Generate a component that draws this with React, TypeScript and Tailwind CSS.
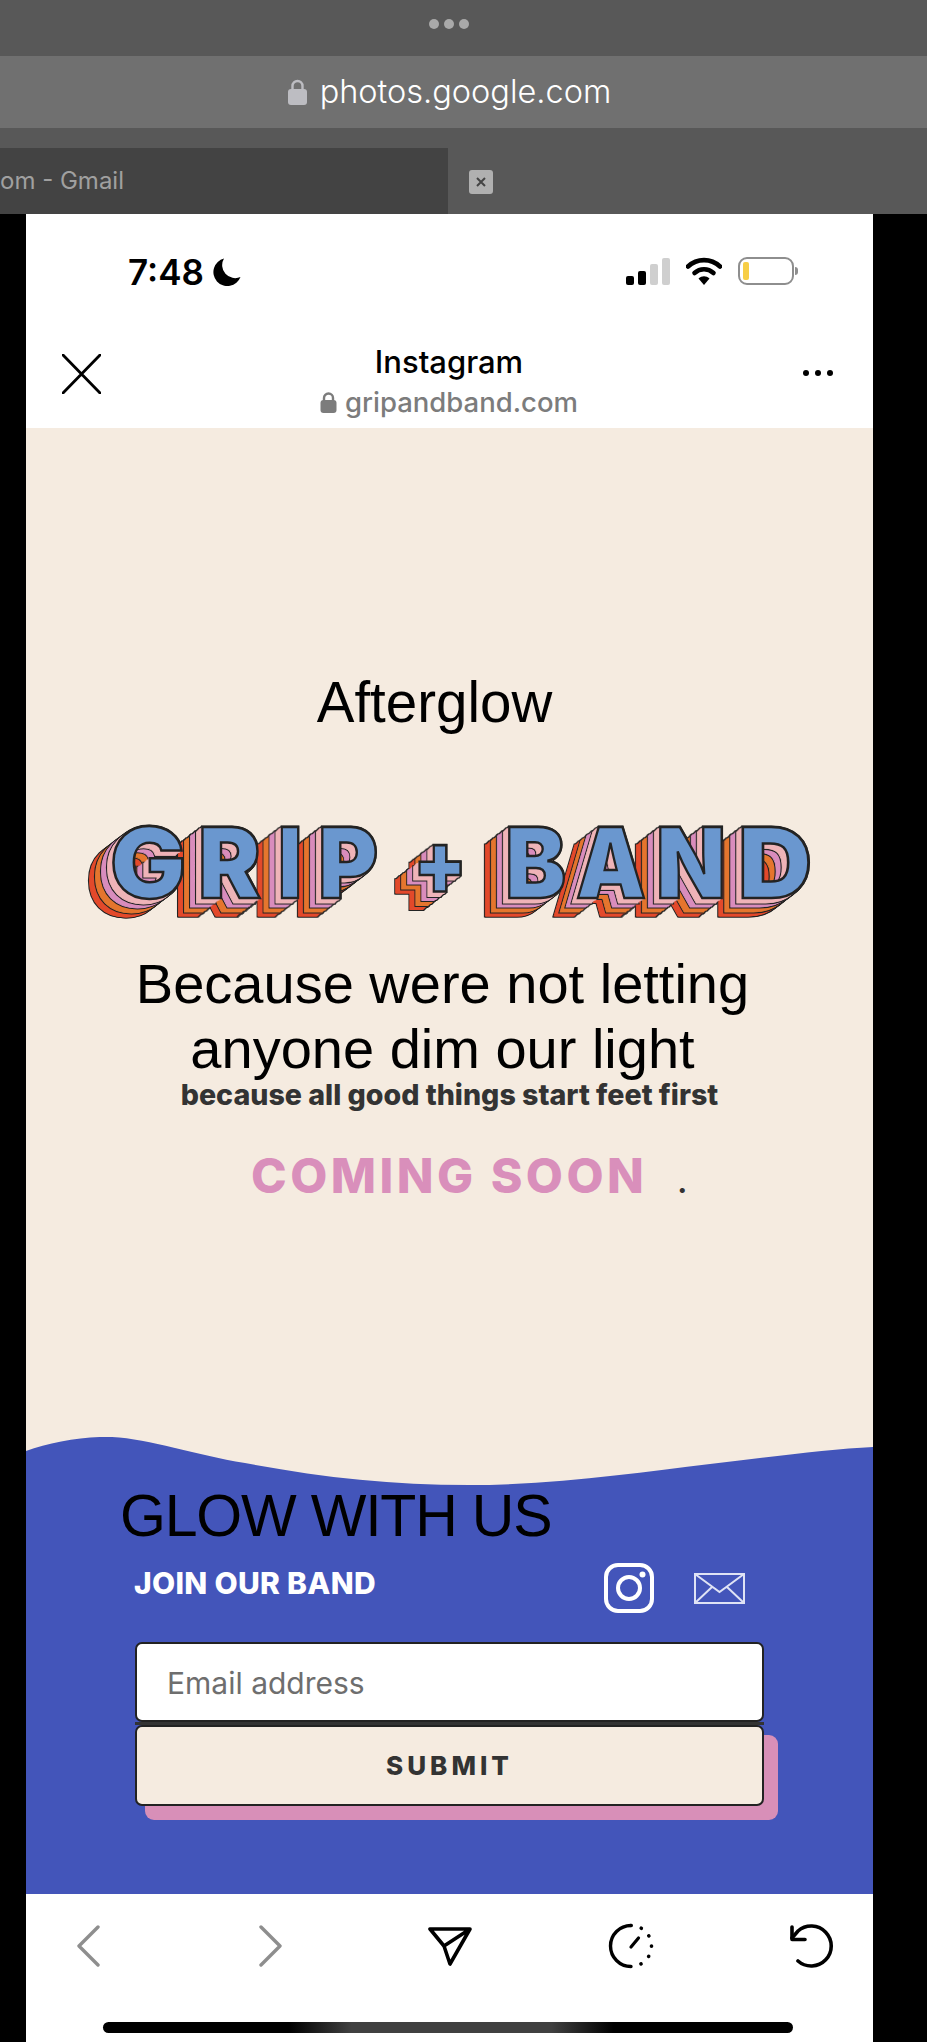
const sans = "font-['Inter',sans-serif]";
const helv = "font-['Liberation_Sans',Arial,sans-serif]";

// letters of the logo, x and width in page pixels
const logoLetters = [
  { ch: "G", x: 110, w: 76 },
  { ch: "R", x: 198, w: 63 },
  { ch: "I", x: 278, w: 24 },
  { ch: "P", x: 318, w: 60 },
  { ch: "+", x: 413, w: 54 },
  { ch: "B", x: 505, w: 61 },
  { ch: "A", x: 576, w: 70 },
  { ch: "N", x: 656, w: 70 },
  { ch: "D", x: 738, w: 74 },
];

const layers = ["#e34a2c", "#e5762f", "#d98dbd", "#efb4b8"];
const stepX = -6;
const stepY = 4.6;

function Logo() {
  const silhouette = Array.from({ length: 25 }, (_, i) => i);
  return (
    <svg viewBox="26 810 847 120" className={`block h-[120px] w-[847px] font-black ${sans}`}>
      <defs>
        <g id="gb-logo">
          {logoLetters.map((l) => (
            <text
              key={l.x}
              x={l.x}
              y={l.ch === "+" ? 894 : 898}
              fontSize={l.ch === "+" ? 88 : 98}
              textLength={l.w}
              lengthAdjust="spacingAndGlyphs"
            >
              {l.ch}
            </text>
          ))}
        </g>
      </defs>
      {silhouette.map((i) => (
        <use key={i} href="#gb-logo" x={i * (stepX / 6)} y={i * (stepY / 6)} fill="#232323" stroke="#232323" strokeWidth={3} />
      ))}
      {layers.map((color, k) => {
        const level = 4 - k;
        const ticks = [1, 2, 3, 4, 5, 6];
        return (
          <g key={color}>
            {k > 0 && (
              <use href="#gb-logo" x={level * stepX} y={level * stepY} fill="#232323" stroke="#232323" strokeWidth={3} />
            )}
            {ticks.map((t) => {
              const off = level - (t - 1) / 6;
              return (
                <use key={t} href="#gb-logo" x={off * stepX} y={off * stepY} fill={color} stroke={color} strokeWidth={0.8} />
              );
            })}
          </g>
        );
      })}
      <use href="#gb-logo" fill="#6a97cf" stroke="#232323" strokeWidth={2.5} />
    </svg>
  );
}

function TopChrome() {
  return (
    <>
      <div className="flex h-14 items-center justify-center gap-[5px] bg-[#585858] pr-[29px] pb-2">
        <span className="h-[10px] w-[10px] rounded-full bg-[#a9a9a9]" />
        <span className="h-[10px] w-[10px] rounded-full bg-[#a9a9a9]" />
        <span className="h-[10px] w-[10px] rounded-full bg-[#a9a9a9]" />
      </div>
      <div className="flex h-[72px] items-center justify-center gap-[13px] bg-[#707070] pr-[28px]">
        <svg width="19" height="26" viewBox="0 0 19 26">
          <path d="M4.5 11V7a5 5 0 0 1 10 0v4" fill="none" stroke="#bdbdc2" strokeWidth="2.4" />
          <rect x="0" y="10" width="19" height="16" rx="3" fill="#bdbdc2" />
        </svg>
        <span className={`text-[32.5px] leading-none text-white ${sans} font-light`}>photos.google.com</span>
      </div>
      <div className="flex h-[86px] bg-[#585858] pt-5">
        <div className={`flex h-[66px] w-[448px] items-center bg-[#434343] text-[24px] text-[#a0a0a0] ${sans}`}>
          <span>om - Gmail</span>
        </div>
        <div className="mt-[22px] ml-[21px] flex h-6 w-6 items-center justify-center rounded-[3px] bg-[#b0b0b0]">
          <svg width="12" height="12" viewBox="0 0 12 12">
            <path d="M2 2l8 8M10 2l-8 8" stroke="#444" strokeWidth="2" />
          </svg>
        </div>
      </div>
    </>
  );
}

function StatusBar() {
  return (
    <div className="flex h-[114px] items-start justify-between pt-[44px] pr-[75px] pl-[102px]">
      <div className="flex items-center gap-[9px]">
        <span className={`text-[35px] leading-[28px] font-semibold text-black ${sans}`}>7:48</span>
        <svg width="28" height="28" viewBox="0 0 28 28">
          <path d="M11 0.5A14 14 0 1 0 27.5 19 A13 13 0 0 1 11 0.5z" fill="#000" />
        </svg>
      </div>
      <div className="-mt-px flex items-start">
        <div className="mt-[1px] flex h-[27px] items-end gap-[4px]">
          <span className="h-[9px] w-2 rounded-[2px] bg-black" />
          <span className="h-[14px] w-2 rounded-[2px] bg-black" />
          <span className="h-[21px] w-2 rounded-[2px] bg-[#cfcfcf]" />
          <span className="h-[27px] w-2 rounded-[2px] bg-[#cfcfcf]" />
        </div>
        <svg className="ml-4" width="36" height="28" viewBox="0 0 36 28">
          <path d="M2 9.5C11 1 25 1 34 9.5" fill="none" stroke="#000" strokeWidth="4.6" strokeLinecap="round" />
          <path d="M8.5 16C14 11 22 11 27.5 16" fill="none" stroke="#000" strokeWidth="4.6" strokeLinecap="round" />
          <path d="M12.5 21.5C16 18.5 20 18.5 23.5 21.5L18 28z" fill="#000" />
        </svg>
        <div className="ml-4 flex items-center">
          <div className="flex h-7 w-[56px] items-center rounded-[9px] border-2 border-[#8e8e8e] bg-white pl-[3px]">
            <span className="h-[18px] w-[6px] rounded-[2px] bg-[#f7ce46]" />
          </div>
          <span className="ml-[1px] h-2 w-[3px] rounded-r-full bg-[#8e8e8e]" />
        </div>
      </div>
    </div>
  );
}

function BrowserHeader() {
  return (
    <div className="grid h-[100px] grid-cols-[1fr_auto_1fr] items-start pr-10 pl-9">
      <svg className="mt-[26px]" width="39" height="40" viewBox="0 0 39 40">
        <path d="M1 1l37 38M38 1L1 39" stroke="#000" strokeWidth="2.8" strokeLinecap="round" fill="none" />
      </svg>
      <div className={`flex flex-col items-center pl-[3px] ${sans}`}>
        <span className="mt-[16px] text-[31px] leading-[36px] font-medium text-black">Instagram</span>
        <div className="mt-[5px] flex items-center gap-2 text-[27.5px] leading-[34px] font-medium text-[#7c7c7c]">
          <svg width="17" height="21" viewBox="0 0 17 21">
            <path d="M4 9V6a4.5 4.5 0 0 1 9 0v3" fill="none" stroke="#7c7c7c" strokeWidth="2.4" />
            <rect x="0.5" y="8" width="16" height="13" rx="3" fill="#7c7c7c" />
          </svg>
          <span>gripandband.com</span>
        </div>
      </div>
      <div className="mt-[42px] flex justify-end gap-[6px]">
        <span className="h-[6px] w-[6px] rounded-full bg-black" />
        <span className="h-[6px] w-[6px] rounded-full bg-black" />
        <span className="h-[6px] w-[6px] rounded-full bg-black" />
      </div>
    </div>
  );
}

function Hero() {
  return (
    <div className="flex h-[1009px] flex-col bg-[#f5ebe0]">
      <h1 className={`mt-[239px] pr-[30px] text-center text-[56.5px] leading-[72px] text-black ${helv}`}>Afterglow</h1>
      <div className="mt-[71px]">
        <Logo />
      </div>
      <p className={`mt-[21px] pr-[14px] text-center text-[56px] leading-[65px] text-black ${helv}`}>
        Because were not letting
        <br />
        anyone dim our light
      </p>
      <p className={`mt-[-4px] text-center text-[28.6px] leading-[36px] font-extrabold text-[#333] ${sans}`}>
        because all good things start feet first
      </p>
      <div className={`mt-[33px] flex items-baseline pl-[225px] ${sans}`}>
        <span className="text-[48px] leading-[60px] font-extrabold tracking-[3.5px] text-[#d98fbb]">COMING SOON</span>
        <span className="ml-[30px] text-[30px] font-bold text-[#333]">.</span>
      </div>
    </div>
  );
}

function Signup() {
  return (
    <div className="bg-[#f5ebe0]">
      <svg viewBox="26 1437 847 48" className="block h-12 w-[847px]" preserveAspectRatio="none">
        <path
          d="M26 1451 C50 1442 85 1436 112 1437 C150 1439 195 1455 245 1463 C320 1477 390 1485 469 1485 C560 1485 640 1472 710 1464 C770 1457 830 1449 873 1447 L873 1485 L26 1485 Z"
          fill="#4355ba"
        />
      </svg>
      <div className="h-[409px] bg-[#4355ba] pl-[94px]">
        <h2 className={`pt-[1px] text-[59px] leading-[60px] tracking-[-1.2px] text-black ${helv}`}>GLOW WITH US</h2>
        <div className="mt-[16px] ml-[4px] flex h-[60px] items-start">
          <span className={`mt-[4px] ml-[10px] text-[30px] leading-[34px] font-extrabold tracking-[0.3px] text-white ${sans}`}>
            JOIN OUR BAND
          </span>
          <svg className="mt-px ml-[228px]" width="50" height="50" viewBox="0 0 50 50">
            <rect x="2" y="2" width="46" height="46" rx="12" fill="none" stroke="#fff" strokeWidth="4" />
            <circle cx="25" cy="25" r="11" fill="none" stroke="#fff" strokeWidth="4" />
            <circle cx="38.5" cy="11.5" r="3" fill="#fff" />
          </svg>
          <svg className="mt-[11px] ml-[40px]" width="51" height="31" viewBox="0 0 51 31">
            <rect x="1" y="1" width="49" height="29" fill="none" stroke="#dfe3f5" strokeWidth="2" />
            <path d="M1 1l24.5 18L50 1M1 30l17-16M50 30L33 14" fill="none" stroke="#dfe3f5" strokeWidth="2" />
          </svg>
        </div>
        <div className="mt-[20px] ml-[15px] w-[629px]">
          <div className={`flex h-[80px] items-center rounded-[7px] border-2 border-[#222] bg-white pt-[3px] pl-[30px] text-[30px] text-[#6e6e6e] ${sans}`}>
            Email address
          </div>
          <div className="h-[3px] bg-[#333]" />
          <div className={`flex h-[81px] items-center justify-center rounded-[7px] border-2 border-[#222] bg-[#f5ebe0] text-[26px] font-extrabold tracking-[4px] text-[#333] shadow-[12px_12px_0_2px_#d88fb8] ${sans}`}>
            SUBMIT
          </div>
        </div>
      </div>
    </div>
  );
}

function BottomNav() {
  return (
    <div className="flex flex-1 flex-col bg-white">
      <div className="mt-[29px] flex h-[46px] items-center justify-center">
        <div className="flex w-[181px] shrink-0 justify-center">
          <svg width="24" height="42" viewBox="0 0 24 42">
            <path d="M22 2L3 21l19 19" fill="none" stroke="#8e8e8e" strokeWidth="3.4" strokeLinecap="round" strokeLinejoin="round" />
          </svg>
        </div>
        <div className="flex w-[181px] shrink-0 justify-center pl-[5px]">
          <svg width="24" height="42" viewBox="0 0 24 42">
            <path d="M2 2l19 19L2 40" fill="none" stroke="#8e8e8e" strokeWidth="3.4" strokeLinecap="round" strokeLinejoin="round" />
          </svg>
        </div>
        <div className="flex w-[181px] shrink-0 justify-center">
          <svg width="44" height="40" viewBox="0 0 44 40">
            <path d="M2 3h40L22 38 16 20z M42 3L16 20" fill="none" stroke="#000" strokeWidth="3.6" strokeLinejoin="round" />
          </svg>
        </div>
        <div className="flex w-[181px] shrink-0 justify-center">
          <svg width="46" height="46" viewBox="0 0 46 46">
            <path d="M23 2.5A20.5 20.5 0 0 0 23 43.5" fill="none" stroke="#000" strokeWidth="3.4" strokeLinecap="round" />
            <path
              d="M23 2.5A20.5 20.5 0 0 1 23 43.5"
              fill="none"
              stroke="#000"
              strokeWidth="3.6"
              strokeLinecap="round"
              strokeDasharray="0.1 10.6"
            />
            <path d="M23 24L30.5 15" fill="none" stroke="#000" strokeWidth="3.2" strokeLinecap="round" />
          </svg>
        </div>
        <div className="flex w-[181px] shrink-0 justify-center">
          <svg width="44" height="46" viewBox="0 0 44 46">
            <path d="M8 38A20 20 0 1 0 8 8L2 15" fill="none" stroke="#000" strokeWidth="3.6" strokeLinecap="round" />
            <path d="M2 4v12.5h13" fill="none" stroke="#000" strokeWidth="3.6" strokeLinecap="round" strokeLinejoin="round" />
          </svg>
        </div>
      </div>
      <div className="mt-[53px] ml-[77px] h-[11px] w-[690px] rounded-full bg-[linear-gradient(90deg,#000_0%,#000_27%,#404040_36%,#404040_65%,#000_74%,#000_100%)]" />
    </div>
  );
}

export default function App() {
  return (
    <div className="flex h-[2042px] w-[927px] flex-col overflow-hidden bg-black">
      <TopChrome />
      <div className="ml-[26px] flex w-[847px] flex-1 flex-col bg-white">
        <StatusBar />
        <BrowserHeader />
        <Hero />
        <Signup />
        <BottomNav />
      </div>
    </div>
  );
}
